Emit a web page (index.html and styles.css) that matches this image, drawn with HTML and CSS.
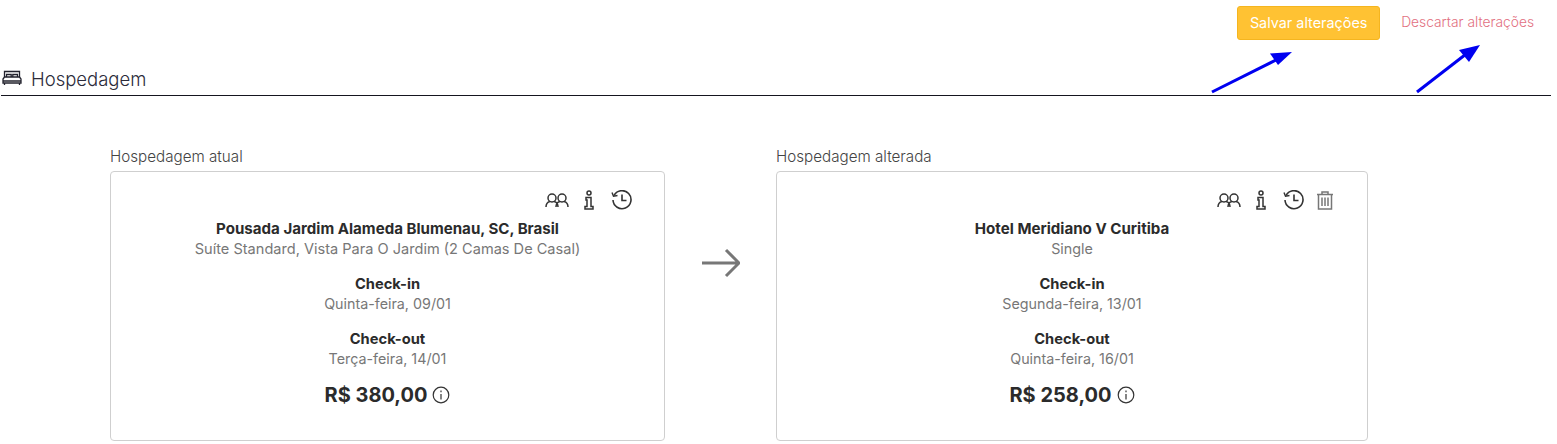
FILE: index.html
```html
<!DOCTYPE html>
<html>
  <head>
    <title>Hospedagem</title>
    <link rel="stylesheet" href="styles.css">
  </head>

  <body>
    <div class="actions">
      <button class="btn-save">Salvar alterações</button>
      <a class="btn-discard">Descartar alterações</a>
    </div>

    <div class="section-title">
      <svg class="bed" width="20" height="16" viewBox="0 0 20 16" fill="none" stroke="#23232e" stroke-width="1.3">
        <path d="M2.500 7V1.500h15V7"/>
        <path d="M4.500 7V4.500h4.700V7M10.800 7V4.500h4.700V7"/>
        <path d="M1 13V9l1.500-2h15L19 9v4z"/>
        <path d="M1 11h18M2.500 13v2M17.500 13v2"/>
      </svg>
      <span>Hospedagem</span>
    </div>

    <div class="compare">
      <div class="col col-current">
        <div class="col-label">Hospedagem atual</div>
        <div class="card">
          <div class="card-icons">
            <svg class="ic-people" width="24" height="16" viewBox="0 0 24 16" fill="none" stroke="#333" stroke-width="1.5">
              <circle cx="7" cy="6" r="4"/><circle cx="17" cy="6" r="4"/>
              <path d="M1 15c0-3 2-5 4-5.500M13 15c0-3-2-5-4-5.500M11 15c0-3 2-5 4-5.500M23 15c0-3-2-5-4-5.500"/>
            </svg>
            <svg class="ic-info" width="10" height="20" viewBox="0 0 10 20" fill="none" stroke="#333" stroke-width="1.5">
              <circle cx="5" cy="3" r="2"/>
              <path d="M2 7.500h5v9h2v2.500H1v-2.500h2v-6.500H2z"/>
            </svg>
            <svg class="ic-history" width="21" height="20" viewBox="0 0 21 20" fill="none" stroke="#333" stroke-width="1.6">
              <path d="M3 5.500A9 9 0 1 1 2 10"/>
              <path d="M1 2.500l1.500 3.800 4-.8" stroke-width="1.400"/>
              <path d="M11 4.500V10.500h4.500"/>
            </svg>
          </div>
          <div class="hotel">Pousada Jardim Alameda Blumenau, SC, Brasil</div>
          <div class="room">Suíte Standard, Vista Para O Jardim (2 Camas De Casal)</div>
          <div class="date-label">Check-in</div>
          <div class="muted">Quinta-feira, 09/01</div>
          <div class="date-label">Check-out</div>
          <div class="muted">Terça-feira, 14/01</div>
          <div class="price">
            R$ 380,00
            <svg width="18" height="18" viewBox="0 0 18 18" fill="none" stroke="#333" stroke-width="1.200">
              <circle cx="9" cy="9" r="7.800"/>
              <path d="M9 8v5.500M9 4.500v1.800"/>
            </svg>
          </div>
        </div>
      </div>

      <div class="arrow">
        <svg width="38" height="30" viewBox="0 0 38 30" fill="none" stroke="#777" stroke-width="3">
          <path d="M0 15h36M24 2l13 13-13 13"/>
        </svg>
      </div>

      <div class="col col-changed">
        <div class="col-label">Hospedagem alterada</div>
        <div class="card">
          <div class="card-icons">
            <svg class="ic-people" width="24" height="16" viewBox="0 0 24 16" fill="none" stroke="#333" stroke-width="1.5">
              <circle cx="7" cy="6" r="4"/><circle cx="17" cy="6" r="4"/>
              <path d="M1 15c0-3 2-5 4-5.500M13 15c0-3-2-5-4-5.500M11 15c0-3 2-5 4-5.500M23 15c0-3-2-5-4-5.500"/>
            </svg>
            <svg class="ic-info" width="10" height="20" viewBox="0 0 10 20" fill="none" stroke="#333" stroke-width="1.5">
              <circle cx="5" cy="3" r="2"/>
              <path d="M2 7.500h5v9h2v2.500H1v-2.500h2v-6.500H2z"/>
            </svg>
            <svg class="ic-history" width="21" height="20" viewBox="0 0 21 20" fill="none" stroke="#333" stroke-width="1.6">
              <path d="M3 5.500A9 9 0 1 1 2 10"/>
              <path d="M1 2.500l1.500 3.800 4-.8" stroke-width="1.400"/>
              <path d="M11 4.500V10.500h4.500"/>
            </svg>
            <svg class="ic-trash" width="16" height="19" viewBox="0 0 16 19" fill="none" stroke="#777" stroke-width="1.500">
              <path d="M0 3.500h16M5 3.500V1h6v2.500"/>
              <path d="M1.500 3.500V18h13V3.500"/>
              <path d="M5 6.500V15M8 6.500V15M11 6.500V15"/>
            </svg>
          </div>
          <div class="hotel">Hotel Meridiano V Curitiba</div>
          <div class="muted">Single</div>
          <div class="date-label">Check-in</div>
          <div class="muted">Segunda-feira, 13/01</div>
          <div class="date-label">Check-out</div>
          <div class="muted">Quinta-feira, 16/01</div>
          <div class="price">
            R$ 258,00
            <svg width="18" height="18" viewBox="0 0 18 18" fill="none" stroke="#333" stroke-width="1.200">
              <circle cx="9" cy="9" r="7.800"/>
              <path d="M9 8v5.500M9 4.500v1.800"/>
            </svg>
          </div>
        </div>
      </div>
    </div>

    <svg class="annotations" width="1557" height="110" viewBox="0 0 1557 110" fill="#0000f0" stroke="#0000f0">
      <path d="M1212 92L1280 58" stroke-width="3" fill="none"/>
      <path d="M1292 52L1270 53.500 1278 65z" stroke="none"/>
      <path d="M1417 92L1470 51" stroke-width="3" fill="none"/>
      <path d="M1480 45L1459 50 1469 62z" stroke="none"/>
    </svg>
  </body>
</html>
```

FILE: styles.css
```css
body {
  margin: 0;
  font-family: "Inter", "Open Sans", sans-serif;
  color: #2b2b2b;
  background: #fff;
  position: relative;
  overflow: hidden;
}

.actions {
  display: flex;
  justify-content: flex-end;
  align-items: center;
  gap: 21px;
  height: 34px;
  padding: 6px 23px 0 0;
}
.btn-save {
  width: 143px;
  height: 34px;
  background: #ffc233;
  border: 1px solid #f5b51f;
  border-radius: 3px;
  color: #fff;
  font-family: inherit;
  font-size: 14.400px;
  padding: 0 0 1px;
}
.btn-discard {
  color: #e2707f;
  font-size: 13.800px;
  font-weight: 300;
  white-space: nowrap;
  padding-bottom: 2px;
}

.section-title {
  display: flex;
  align-items: center;
  gap: 9px;
  height: 56px;
  box-sizing: border-box;
  margin: 0 6px 0 1px;
  padding: 22px 0 0 1px;
  border-bottom: 1px solid #15151f;
  font-size: 18.500px;
  font-weight: 300;
  color: #2b2b3a;
}
.bed {
  margin-top: -1px;
}

.compare {
  display: flex;
  margin-top: 52px;
  padding-left: 110px;
}
.col-label {
  height: 23px;
  font-size: 15.200px;
  font-weight: 300;
  line-height: 17px;
  color: #444;
}
.col-current {
  width: 555px;
}
.col-changed {
  width: 592px;
}
.arrow {
  width: 111px;
  padding: 100px 0 0 37px;
  box-sizing: border-box;
}

.card {
  height: 270px;
  box-sizing: border-box;
  border: 1px solid #cfcfcf;
  border-radius: 4px;
  text-align: center;
  font-size: 14.300px;
  line-height: 20px;
}
.card-icons {
  display: flex;
  justify-content: flex-end;
  align-items: center;
  height: 20px;
  margin-top: 18px;
  padding-right: 32px;
}
.col-changed .card-icons {
  padding-right: 34px;
}
.ic-info {
  margin-left: 15px;
}
.ic-history {
  margin-left: 17px;
}
.ic-trash {
  margin-left: 13px;
}
.hotel {
  font-weight: 700;
  font-size: 15.100px;
  margin-top: 9px;
}
.muted {
  color: #777;
}
.room {
  color: #777;
  font-size: 14.570px;
}
.date-label {
  font-weight: 700;
  font-size: 14.700px;
  margin-top: 15px;
}
.price {
  display: flex;
  justify-content: center;
  align-items: center;
  gap: 5px;
  margin-top: 13px;
  font-size: 20px;
  font-weight: 700;
  line-height: 26px;
}

.annotations {
  position: absolute;
  left: 0;
  top: 0;
  pointer-events: none;
}
```
